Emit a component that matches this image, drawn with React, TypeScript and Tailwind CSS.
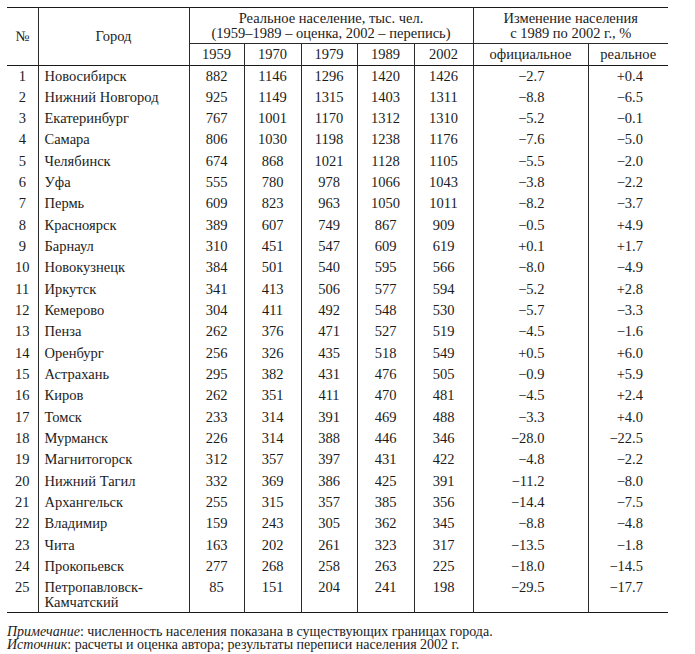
const rows: [string, string, number, number, number, number, number, string, string][] = [
  ["1", "Новосибирск", 882, 1146, 1296, 1420, 1426, "−2.7", "+0.4"],
  ["2", "Нижний Новгород", 925, 1149, 1315, 1403, 1311, "−8.8", "−6.5"],
  ["3", "Екатеринбург", 767, 1001, 1170, 1312, 1310, "−5.2", "−0.1"],
  ["4", "Самара", 806, 1030, 1198, 1238, 1176, "−7.6", "−5.0"],
  ["5", "Челябинск", 674, 868, 1021, 1128, 1105, "−5.5", "−2.0"],
  ["6", "Уфа", 555, 780, 978, 1066, 1043, "−3.8", "−2.2"],
  ["7", "Пермь", 609, 823, 963, 1050, 1011, "−8.2", "−3.7"],
  ["8", "Красноярск", 389, 607, 749, 867, 909, "−0.5", "+4.9"],
  ["9", "Барнаул", 310, 451, 547, 609, 619, "+0.1", "+1.7"],
  ["10", "Новокузнецк", 384, 501, 540, 595, 566, "−8.0", "−4.9"],
  ["11", "Иркутск", 341, 413, 506, 577, 594, "−5.2", "+2.8"],
  ["12", "Кемерово", 304, 411, 492, 548, 530, "−5.7", "−3.3"],
  ["13", "Пенза", 262, 376, 471, 527, 519, "−4.5", "−1.6"],
  ["14", "Оренбург", 256, 326, 435, 518, 549, "+0.5", "+6.0"],
  ["15", "Астрахань", 295, 382, 431, 476, 505, "−0.9", "+5.9"],
  ["16", "Киров", 262, 351, 411, 470, 481, "−4.5", "+2.4"],
  ["17", "Томск", 233, 314, 391, 469, 488, "−3.3", "+4.0"],
  ["18", "Мурманск", 226, 314, 388, 446, 346, "−28.0", "−22.5"],
  ["19", "Магнитогорск", 312, 357, 397, 431, 422, "−4.8", "−2.2"],
  ["20", "Нижний Тагил", 332, 369, 386, 425, 391, "−11.2", "−8.0"],
  ["21", "Архангельск", 255, 315, 357, 385, 356, "−14.4", "−7.5"],
  ["22", "Владимир", 159, 243, 305, 362, 345, "−8.8", "−4.8"],
  ["23", "Чита", 163, 202, 261, 323, 317, "−13.5", "−1.8"],
  ["24", "Прокопьевск", 277, 268, 258, 263, 225, "−18.0", "−14.5"],
];

const cell = "border-x border-[#2a2a2a] align-top pt-[3px] leading-[15px]";

export default function App(): React.ReactElement {
  return (
    <div className="min-h-screen bg-white pl-[7px] pt-[7px] font-['Liberation_Serif','Times_New_Roman',serif] text-[14.5px] text-[#1c1c1c]">
      <table className="w-[661px] table-fixed border-collapse">
        <colgroup>
          <col className="w-[31px]" />
          <col className="w-[151px]" />
          <col className="w-[55px]" />
          <col className="w-[57px]" />
          <col className="w-[56px]" />
          <col className="w-[57px]" />
          <col className="w-[59px]" />
          <col className="w-[115px]" />
          <col className="w-[80px]" />
        </colgroup>
        <thead>
          <tr className="h-[36px] border-t border-[#1a1a1a]">
            <th rowSpan={2} className="border-r border-[#2a2a2a] text-center font-normal leading-[15px]">
              №
            </th>
            <th rowSpan={2} className="border-x border-[#2a2a2a] text-center font-normal leading-[15px]">
              Город
            </th>
            <th colSpan={5} className="border-x border-b border-[#2a2a2a] text-center font-normal leading-[15px]">
              Реальное население, тыс. чел.
              <br />
              (1959–1989 – оценка, 2002 – перепись)
            </th>
            <th colSpan={2} className="border-l border-b border-[#2a2a2a] text-center font-normal leading-[15px]">
              Изменение населения
              <br />с 1989 по 2002 г., %
            </th>
          </tr>
          <tr className="h-[22px] border-b border-[#1a1a1a]">
            {["1959", "1970", "1979", "1989", "2002"].map((y) => (
              <th key={y} className="border-x border-[#2a2a2a] text-center font-normal leading-[15px]">
                {y}
              </th>
            ))}
            <th className="border-x border-[#2a2a2a] text-center font-normal leading-[15px]">официальное</th>
            <th className="border-l border-[#2a2a2a] text-center font-normal leading-[15px]">реальное</th>
          </tr>
        </thead>
        <tbody>
          {rows.map((r) => (
            <tr key={r[0]} className="h-[21.33px]">
              <td className={`${cell} border-l-0 text-center`}>{r[0]}</td>
              <td className={`${cell} pl-[6px]`}>{r[1]}</td>
              {[r[2], r[3], r[4], r[5], r[6]].map((v, i) => (
                <td key={i} className={`${cell} text-center`}>
                  {v}
                </td>
              ))}
              <td className={`${cell} pr-[43px] text-right`}>{r[7]}</td>
              <td className={`${cell} border-r-0 pr-[25px] text-right`}>{r[8]}</td>
            </tr>
          ))}
          <tr className="h-[35px] border-b border-[#1a1a1a]">
            <td className={`${cell} border-l-0 text-center`}>25</td>
            <td className={`${cell} pl-[6px]`}>
              Петропавловск-
              <br />
              Камчатский
            </td>
            {[85, 151, 204, 241, 198].map((v, i) => (
              <td key={i} className={`${cell} text-center`}>
                {v}
              </td>
            ))}
            <td className={`${cell} pr-[43px] text-right`}>−29.5</td>
            <td className={`${cell} border-r-0 pr-[25px] text-right`}>−17.7</td>
          </tr>
        </tbody>
      </table>
      <div className="mt-[12px] leading-[13.5px] text-[14px]">
        <p>
          <i>Примечание</i>: численность населения показана в существующих границах города.
        </p>
        <p>
          <i>Источник</i>: расчеты и оценка автора; результаты переписи населения 2002 г.
        </p>
      </div>
    </div>
  );
}
